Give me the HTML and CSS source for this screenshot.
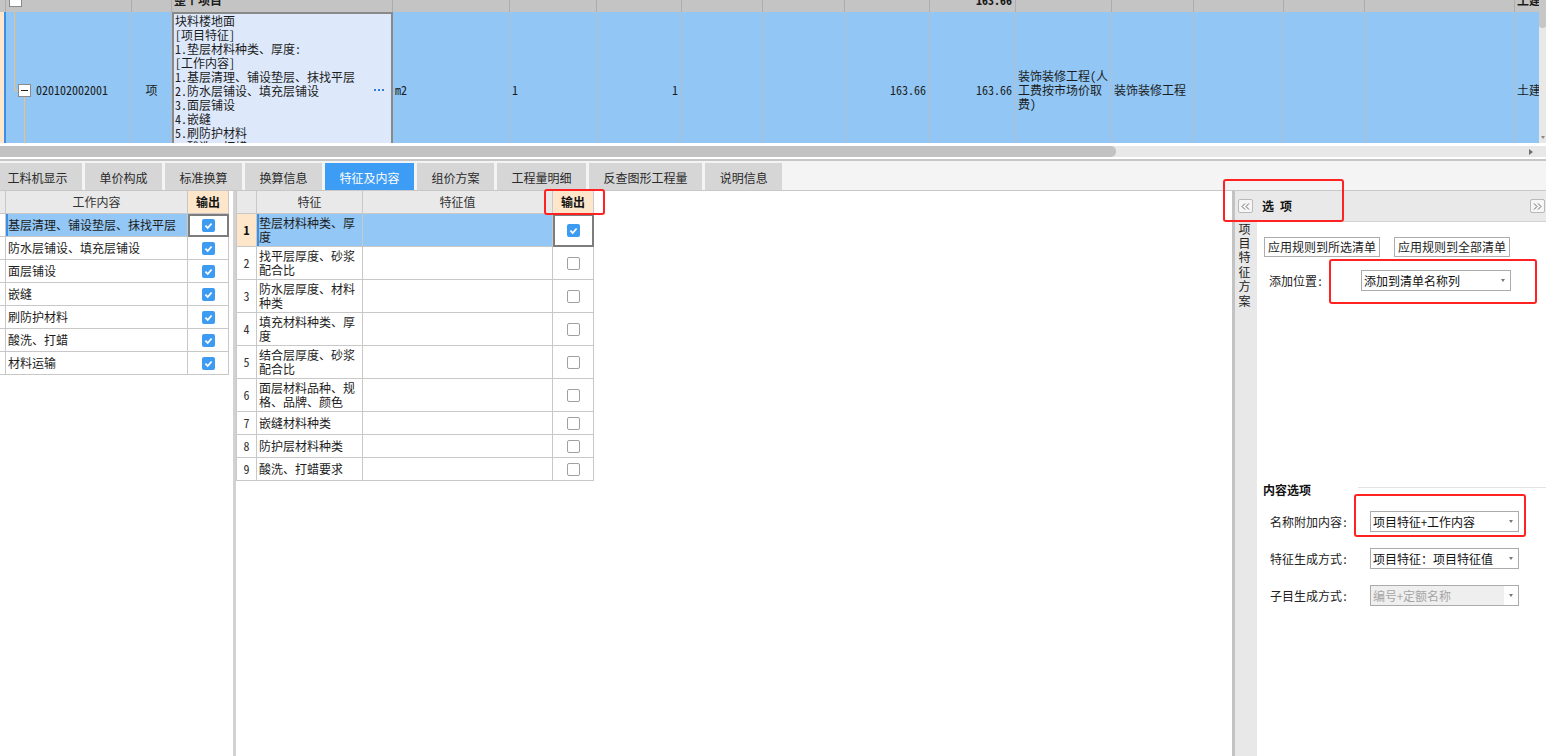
FILE: index.html
```html
<!DOCTYPE html>
<html lang="zh-CN">
<head>
<meta charset="utf-8">
<title>特征及内容</title>
<link rel="stylesheet" href="styles.css">
</head>
<body>
<div class="app">
  <section class="top">
    <div class="sheet">
      <div class="sheet-scroll">
        <div class="trow thead">
          <div class="c c-rh"></div>
          <div class="c"><span class="hbox"></span></div>
          <div class="c"></div>
          <div class="c">整个项目</div>
          <div class="c"></div>
          <div class="c"></div>
          <div class="c"></div>
          <div class="c"></div>
          <div class="c"></div>
          <div class="c"></div>
          <div class="c r">163.66</div>
          <div class="c"></div>
          <div class="c"></div>
          <div class="c"></div>
          <div class="c"></div>
          <div class="c"></div>
          <div class="c">土建</div>
        </div>
        <div class="trow tdata">
          <div class="c c-rh"></div>
          <div class="c tree">
            <svg class="tree-svg" width="30" height="156" viewBox="0 0 30 156">
              <path d="M8.5 0V78.5H12.5M18.5 85V156" fill="none" stroke="#f5be78" stroke-width="1"/>
              <rect x="12.5" y="72.5" width="12" height="12" fill="#fff" stroke="#8a8a8a"/>
              <path d="M15 78.5H22" stroke="#222" stroke-width="1"/>
            </svg>
            <span>020102002001</span>
          </div>
          <div class="c ctr">项</div>
          <div class="c name-cell">
            <div class="editor">
              <div>块料楼地面</div>
              <div>[项目特征]</div>
              <div>1.垫层材料种类、厚度:</div>
              <div>[工作内容]</div>
              <div>1.基层清理、铺设垫层、抹找平层</div>
              <div>2.防水层铺设、填充层铺设</div>
              <div>3.面层铺设</div>
              <div>4.嵌缝</div>
              <div>5.刷防护材料</div>
              <div>6.酸洗、打蜡</div>
              <div>7.材料运输</div>
              <svg class="more" width="10" height="2" viewBox="0 0 10 2"><rect x="0" width="2" height="2" fill="#2f7fd8"/><rect x="4" width="2" height="2" fill="#2f7fd8"/><rect x="8" width="2" height="2" fill="#2f7fd8"/></svg>
            </div>
          </div>
          <div class="c">m2</div>
          <div class="c">1</div>
          <div class="c r">1</div>
          <div class="c"></div>
          <div class="c"></div>
          <div class="c r">163.66</div>
          <div class="c r">163.66</div>
          <div class="c wrap">装饰装修工程(人工费按市场价取费)</div>
          <div class="c">装饰装修工程</div>
          <div class="c"></div>
          <div class="c"></div>
          <div class="c"></div>
          <div class="c">土建</div>
        </div>
      </div>
    </div>
    <div class="vscroll"><div class="vthumb"></div><span class="tri-d"></span></div>
  </section>
  <div class="hscroll"><div class="hthumb"></div><span class="tri-r"></span></div>
  <div class="sep"></div>

  <nav class="tabs">
    <span class="tab">工料机显示</span>
    <span class="tab">单价构成</span>
    <span class="tab">标准换算</span>
    <span class="tab">换算信息</span>
    <span class="tab active">特征及内容</span>
    <span class="tab">组价方案</span>
    <span class="tab">工程量明细</span>
    <span class="tab">反查图形工程量</span>
    <span class="tab">说明信息</span>
  </nav>

  <main class="main">
    <div class="left">
      <div class="ltable">
        <div class="g gh"></div><div class="g gh ctr">工作内容</div><div class="g gh out">输出</div>
        <div class="g"></div><div class="g sel">基层清理、铺设垫层、抹找平层</div><div class="g ctr focus"><svg class="cb" viewBox="0 0 13 13"><rect width="13" height="13" rx="2" fill="#3d9bf2"/><path d="M3.4 6.7l2.3 2.3 3.9-4.5" fill="none" stroke="#fff" stroke-width="1.8"/></svg></div>
        <div class="g"></div><div class="g">防水层铺设、填充层铺设</div><div class="g ctr"><svg class="cb" viewBox="0 0 13 13"><rect width="13" height="13" rx="2" fill="#3d9bf2"/><path d="M3.4 6.7l2.3 2.3 3.9-4.5" fill="none" stroke="#fff" stroke-width="1.8"/></svg></div>
        <div class="g"></div><div class="g">面层铺设</div><div class="g ctr"><svg class="cb" viewBox="0 0 13 13"><rect width="13" height="13" rx="2" fill="#3d9bf2"/><path d="M3.4 6.7l2.3 2.3 3.9-4.5" fill="none" stroke="#fff" stroke-width="1.8"/></svg></div>
        <div class="g"></div><div class="g">嵌缝</div><div class="g ctr"><svg class="cb" viewBox="0 0 13 13"><rect width="13" height="13" rx="2" fill="#3d9bf2"/><path d="M3.4 6.7l2.3 2.3 3.9-4.5" fill="none" stroke="#fff" stroke-width="1.8"/></svg></div>
        <div class="g"></div><div class="g">刷防护材料</div><div class="g ctr"><svg class="cb" viewBox="0 0 13 13"><rect width="13" height="13" rx="2" fill="#3d9bf2"/><path d="M3.4 6.7l2.3 2.3 3.9-4.5" fill="none" stroke="#fff" stroke-width="1.8"/></svg></div>
        <div class="g"></div><div class="g">酸洗、打蜡</div><div class="g ctr"><svg class="cb" viewBox="0 0 13 13"><rect width="13" height="13" rx="2" fill="#3d9bf2"/><path d="M3.4 6.7l2.3 2.3 3.9-4.5" fill="none" stroke="#fff" stroke-width="1.8"/></svg></div>
        <div class="g"></div><div class="g">材料运输</div><div class="g ctr"><svg class="cb" viewBox="0 0 13 13"><rect width="13" height="13" rx="2" fill="#3d9bf2"/><path d="M3.4 6.7l2.3 2.3 3.9-4.5" fill="none" stroke="#fff" stroke-width="1.8"/></svg></div>
      </div>
    </div>
    <div class="divider"></div>
    <div class="middle">
      <div class="mtable">
        <div class="g gh"></div><div class="g gh ctr">特征</div><div class="g gh ctr">特征值</div><div class="g gh out">输出</div>
        <div class="g rn cur">1</div><div class="g sel ft">垫层材料种类、厚度</div><div class="g sel-v"></div><div class="g ctr focus"><svg class="cb" viewBox="0 0 13 13"><rect width="13" height="13" rx="2" fill="#3d9bf2"/><path d="M3.4 6.7l2.3 2.3 3.9-4.5" fill="none" stroke="#fff" stroke-width="1.8"/></svg></div>
        <div class="g rn">2</div><div class="g ft">找平层厚度、砂浆配合比</div><div class="g"></div><div class="g ctr"><span class="cb off"></span></div>
        <div class="g rn">3</div><div class="g ft">防水层厚度、材料种类</div><div class="g"></div><div class="g ctr"><span class="cb off"></span></div>
        <div class="g rn">4</div><div class="g ft">填充材料种类、厚度</div><div class="g"></div><div class="g ctr"><span class="cb off"></span></div>
        <div class="g rn">5</div><div class="g ft">结合层厚度、砂浆配合比</div><div class="g"></div><div class="g ctr"><span class="cb off"></span></div>
        <div class="g rn">6</div><div class="g ft">面层材料品种、规格、品牌、颜色</div><div class="g"></div><div class="g ctr"><span class="cb off"></span></div>
        <div class="g rn">7</div><div class="g ft">嵌缝材料种类</div><div class="g"></div><div class="g ctr"><span class="cb off"></span></div>
        <div class="g rn">8</div><div class="g ft">防护层材料种类</div><div class="g"></div><div class="g ctr"><span class="cb off"></span></div>
        <div class="g rn">9</div><div class="g ft">酸洗、打蜡要求</div><div class="g"></div><div class="g ctr"><span class="cb off"></span></div>
      </div>
    </div>
    <aside class="right">
      <div class="rp-head">
        <span class="mini-btn"><svg width="9" height="7" viewBox="0 0 9 7"><path d="M4 .5L1 3.5 4 6.5M8 .5L5 3.5 8 6.5" fill="none" stroke="#6a6a6a"/></svg></span>
        <span class="rp-title">选 项</span>
        <span class="mini-btn end"><svg width="9" height="7" viewBox="0 0 9 7"><path d="M1 .5L4 3.5 1 6.5M5 .5L8 3.5 5 6.5" fill="none" stroke="#6a6a6a"/></svg></span>
      </div>
      <div class="rp-body">
        <div class="vstrip"><span class="vtext">项目特征方案</span></div>
        <div class="rp-content">
          <div class="btnrow">
            <span class="btn">应用规则到所选清单</span>
            <span class="btn">应用规则到全部清单</span>
          </div>
          <div class="field f-pos">
            <span class="lbl">添加位置:</span>
            <span class="select">添加到清单名称列<span class="arrowbox"><span class="tri-d dark"></span></span></span>
          </div>
          <div class="group-head">
            <span class="gtitle">内容选项</span>
            <span class="gline"></span>
          </div>
          <div class="field f-opt">
            <span class="lbl">名称附加内容:</span>
            <span class="select">项目特征+工作内容<span class="arrowbox"><span class="tri-d dark"></span></span></span>
          </div>
          <div class="field f-opt">
            <span class="lbl">特征生成方式:</span>
            <span class="select">项目特征：项目特征值<span class="arrowbox"><span class="tri-d dark"></span></span></span>
          </div>
          <div class="field f-opt">
            <span class="lbl">子目生成方式:</span>
            <span class="select disabled">编号+定额名称<span class="arrowbox"><span class="tri-d dark"></span></span></span>
          </div>
        </div>
      </div>
    </aside>
  </main>

  <div class="mark m1"></div>
  <div class="mark m2"></div>
  <div class="mark m3"></div>
  <div class="mark m4"></div>
</div>
</body>
</html>
```

FILE: styles.css
```css
* { box-sizing: border-box; margin: 0; padding: 0; }
html, body { width: 1546px; height: 756px; overflow: hidden; background: #fff; }
body {
  font-family: "Noto Sans Mono CJK SC", "Noto Sans CJK SC", "Liberation Sans", sans-serif;
  font-size: 12px;
  line-height: 14px;
  color: #1c1c1c;
}
.app { position: relative; width: 1546px; height: 756px; overflow: hidden; }

/* ---------- top sheet ---------- */
.top { display: flex; height: 143px; }
.sheet { flex: 1; overflow: hidden; }
.sheet-scroll { margin-top: -12px; }
.trow {
  display: grid;
  grid-template-columns: 6px 126px 40px 221px 117px 87px 85px 81px 82px 85px 86px 96px 82px 90px 81px 150px 40px;
  width: 1555px;
}
.c {
  display: flex;
  align-items: center;
  padding: 0 2px;
  border-right: 1px solid #b3c0cc;
  white-space: nowrap;
  overflow: hidden;
}
.c.r { justify-content: flex-end; padding-right: 3px; }
.c.ctr { justify-content: center; }
.thead { height: 24px; background: #c4c4c4; }
.thead .c { border-right-color: #adadad; font-weight: bold; }
.hbox { width: 13px; height: 13px; background: #fff; border: 1px solid #8a8a8a; margin-left: 1px; }
.tdata { height: 156px; background: #92c7f5; }
.tdata .c-rh { background: #fde6cc; box-shadow: inset -2px 0 #3b8fe6; border-right: none; padding: 0; }
.tree { padding: 0; }
.tree-svg { flex: none; display: block; }
.name-cell { padding: 0; border-right: none; align-items: stretch; }
.editor {
  position: relative;
  width: 100%;
  border: 2px solid #898989;
  border-bottom: none;
  background: #dde9fb;
  padding: 0 1px;
  line-height: 14px;
  overflow: hidden;
}
.more { position: absolute; right: 7px; top: 75px; }
.c.wrap { white-space: normal; line-height: 14px; padding-right: 1px; }

.vscroll { width: 7px; background: #e8e8e8; display: flex; flex-direction: column; align-items: center; }
.vthumb { width: 7px; height: 28px; background: #c7c7c7; border-radius: 0 0 3px 3px; }
.tri-d {
  margin-top: auto; margin-bottom: 4px;
  border-left: 2.5px solid transparent; border-right: 2.5px solid transparent;
  border-top: 3px solid #8a8a8a;
}
.hscroll { display: flex; align-items: center; height: 11px; margin-top: 3px; background: #e8e8e8; }
.hthumb { width: 1116px; height: 11px; background: #c2c2c2; border-radius: 0 5px 5px 0; }
.tri-r {
  margin-left: auto; margin-right: 13px;
  border-top: 3.5px solid transparent; border-bottom: 3.5px solid transparent;
  border-left: 4px solid #6e6e6e;
}
.sep { height: 4px; border-bottom: 2px solid #c6c6c6; }

/* ---------- tabs ---------- */
.tabs {
  display: flex;
  align-items: flex-end;
  gap: 3px;
  height: 30px;
  background: #f4f4f4;
  border-bottom: 1px solid #c8c8c8;
}
.tab {
  height: 27px;
  padding: 3px 14.5px 0;
  background: #d6d6d6;
  line-height: 24px;
  color: #2a2a2a;
  white-space: nowrap;
  font-family: "Noto Sans CJK SC", sans-serif;
}
.tab:first-child { margin-left: -7px; }
.tab.active { background: #3d9cf4; color: #fff; }

/* ---------- main ---------- */
.main { display: flex; height: 565px; }
.left { width: 233px; }
.divider { width: 3px; background: #d2d2d2; }
.middle { width: 996px; }

.g {
  display: flex;
  align-items: center;
  padding: 0 2px;
  border-right: 1px solid #c8c8c8;
  border-bottom: 1px solid #c8c8c8;
  background: #fff;
  overflow: hidden;
}
.g.ctr { justify-content: center; }
.gh { background: #e9e9e9; color: #333; font-family: "Noto Sans CJK SC", sans-serif; }
.gh.out { background: #fde6c9; font-weight: bold; justify-content: center; color: #111; }
.sel { background: #93c7f5; box-shadow: inset 2px 0 #3b8fe6; }
.sel-v { background: #93c7f5; }
.focus { border: 2px solid #7d7d7d; }
.cb { width: 13px; height: 13px; display: block; }
.cb.off { border: 1px solid #a0a0a0; border-radius: 2px; background: #fff; }

.ltable {
  display: grid;
  grid-template-columns: 6px 182px 41px;
  grid-auto-rows: 23px;
  width: 229px;
}
.ltable .g:nth-child(3n+1) { padding: 0; }

.mtable {
  display: grid;
  grid-template-columns: 20px 106px 190px 41px;
  grid-template-rows: 23px 33px 33px 33px 33px 33px 33px 23px 23px 23px;
  width: 358px;
  border-left: 1px solid #c8c8c8;
}
.rn { justify-content: center; color: #333; padding: 0; }
.rn.cur { background: #fde6c9; font-weight: bold; color: #111; }
.ft { white-space: normal; padding: 0 3px 0 2px; line-height: 14px; }

/* ---------- right panel ---------- */
.right { width: 314px; border-left: 3px solid #c3c3c3; display: flex; flex-direction: column; }
.rp-head {
  height: 31px;
  background: #e9e9e9;
  border-bottom: 1px solid #d2d2d2;
  display: flex;
  align-items: center;
}
.mini-btn {
  width: 15px; height: 14px;
  margin-left: 3px;
  border: 1px solid #b9b9b9; border-radius: 2px;
  background: #f6f6f6;
  display: flex; align-items: center; justify-content: center;
}
.mini-btn.end { margin-left: auto; margin-right: 1px; }
.rp-title { margin-left: 9px; font-weight: bold; color: #111; }
.rp-body { flex: 1; display: flex; }
.vstrip {
  width: 22px;
  background: #e8e8e8;
  display: flex;
  justify-content: center;
  align-items: flex-start;
  padding: 1px 4px 0 0;
}
.vtext {
  writing-mode: vertical-rl;
  letter-spacing: 2.4px;
  line-height: 12px;
  font-family: "Noto Sans CJK SC", sans-serif;
  color: #222;
}
.rp-content { flex: 1; padding: 15px 0 0 7px; display: flex; flex-direction: column; }
.btnrow { display: flex; gap: 14px; }
.btn {
  height: 20px;
  padding: 0 3px;
  border: 1px solid #adadad;
  background: #fff;
  line-height: 18px;
  white-space: nowrap;
  font-family: "Noto Sans CJK SC", sans-serif;
}
.field { display: flex; align-items: center; }
.f-pos { margin-top: 13px; padding-left: 5px; }
.f-pos .lbl { width: 92px; }
.f-pos .select { width: 150px; }
.f-opt { margin-top: 16px; padding-left: 6px; }
.group-head + .f-opt { margin-top: 13px; }
.f-opt .lbl { width: 100px; }
.f-opt .select { width: 149px; }
.lbl { color: #222; white-space: nowrap; }
.select {
  display: flex;
  align-items: center;
  height: 21px;
  padding-left: 2px;
  border: 1px solid #ababab;
  background: #fff;
  white-space: nowrap;
  color: #111;
}
.arrowbox {
  margin-left: auto;
  width: 14px; height: 19px;
  background: #fff;
  display: flex; align-items: center; justify-content: center;
}
.arrowbox .tri-d { margin: 0; border-top-color: #777; }
.select.disabled { background: #efefef; color: #a5a5a5; }
.group-head { display: flex; height: 16px; margin-top: 191px; margin-left: -1px; }
.gtitle { font-weight: bold; color: #111; line-height: 16px; }
.gline { flex: 1; height: 1px; background: #e3e3e3; margin: 5px 0 0 47px; }

/* ---------- red annotation frames ---------- */
.mark { position: absolute; border: 2px solid #ff2222; border-radius: 3px; }
.m1 { left: 544px; top: 189px; width: 61px; height: 26px; }
.m2 { left: 1223px; top: 179px; width: 121px; height: 43px; }
.m3 { left: 1329px; top: 259px; width: 208px; height: 45px; }
.m4 { left: 1354px; top: 494px; width: 172px; height: 43px; }
```
